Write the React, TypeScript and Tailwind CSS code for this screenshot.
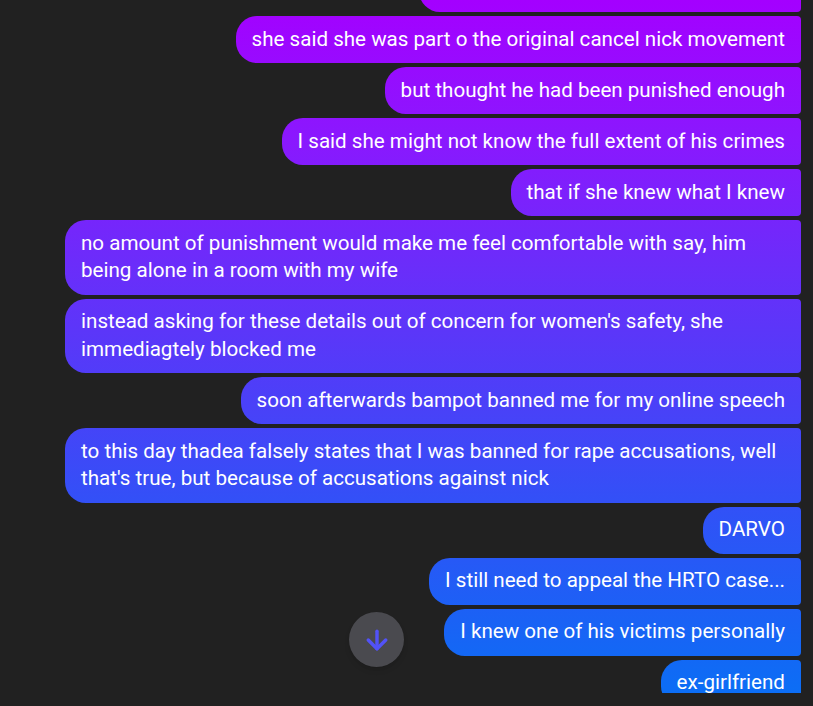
import { ArrowDown } from 'lucide-react';

const messages = [
    'I told her about what he did to them all',
    'she said she was part o the original cancel nick movement',
    'but thought he had been punished enough',
    'I said she might not know the full extent of his crimes',
    'that if she knew what I knew',
    'no amount of punishment would make me feel comfortable with say, him being alone in a room with my wife',
    "instead asking for these details out of concern for women's safety, she immediagtely blocked me",
    'soon afterwards bampot banned me for my online speech',
    "to this day thadea falsely states that I was banned for rape accusations, well that's true, but because of accusations against nick",
    'DARVO',
    'I still need to appeal the HRTO case...',
    'I knew one of his victims personally',
    'ex-girlfriend',
];

function Bubble({ text }: { text: string }) {
    return (
        <div className="max-w-[736px] rounded-l-[21px] rounded-r-[4px] bg-[linear-gradient(to_bottom,#a400ff_0px,#8a18fe_140px,#6c2cfa_260px,#4b40f8_400px,#3350f7_500px,#1a62f5_620px,#0970f5_706px)] bg-fixed px-4 py-[9.75px] text-[20.6px] leading-[27.5px] text-white">
            {text}
        </div>
    );
}

export default function App() {
    return (
        <div className="relative h-[706px] overflow-hidden bg-[#212121] font-['Roboto',sans-serif]">
            <div className="h-[693px] overflow-hidden">
                <div className="-mt-[35px] flex flex-col items-end gap-1 pr-3">
                    {messages.map((m, i) => (
                        <Bubble key={i} text={m} />
                    ))}
                </div>
            </div>
            <button className="absolute left-[349px] top-[612px] flex h-[55px] w-[55px] items-center justify-center rounded-full bg-[#4a4a4f] shadow-md">
                <ArrowDown size={30} strokeWidth={2.75} color="#5252f7" />
            </button>
        </div>
    );
}
